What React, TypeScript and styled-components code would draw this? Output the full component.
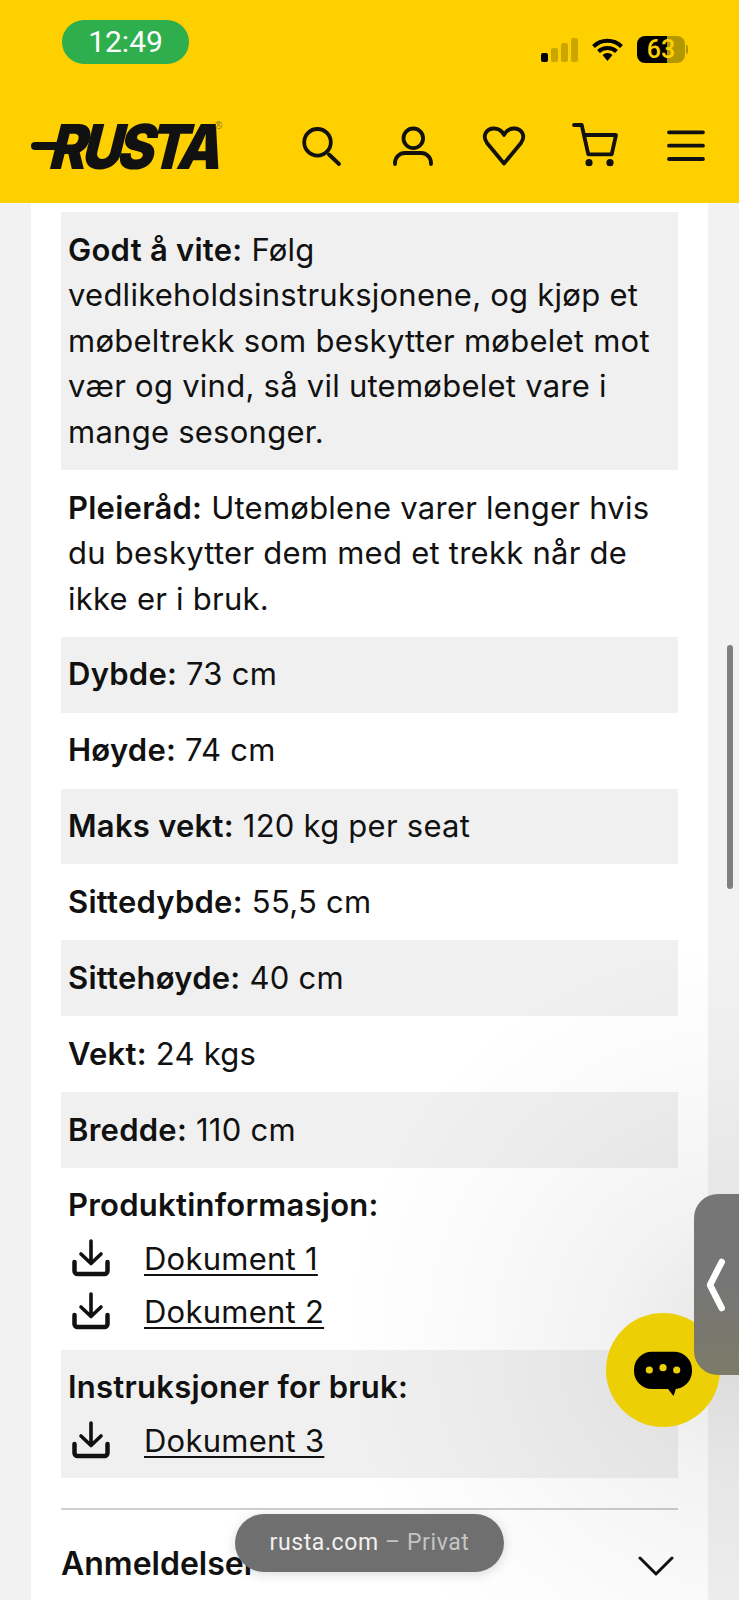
import React from "react";
import styled, { createGlobalStyle } from "styled-components";

const Global = createGlobalStyle`
  html, body { margin: 0; padding: 0; background: #f2f2f2; }
  body { width: 739px; height: 1600px; overflow: hidden; font-family: Inter, "Noto Sans", sans-serif; color: #111; }
  * { box-sizing: border-box; }
`;

const Page = styled.div`
  position: relative;
  width: 739px;
  height: 1600px;
  overflow: hidden;
  background: #f2f2f2;
`;

const Header = styled.header`
  height: 203px;
  background: #ffd000;
  display: flex;
  flex-direction: column;
`;

const StatusBar = styled.div`
  height: 110px;
  padding: 20px 51px 0 62px;
  display: flex;
  justify-content: space-between;
  align-items: flex-start;
`;

const Clock = styled.div`
  width: 127px;
  height: 44px;
  border-radius: 22px;
  background: #2fae4e;
  color: #fff;
  font: 400 30px/44px "Roboto", sans-serif;
  text-align: center;
`;

const StatusIcons = styled.div`
  display: flex;
  align-items: center;
  gap: 14px;
  margin-top: 16px;
`;

const Battery = styled.div`
  display: flex;
  align-items: center;
  gap: 1px;
`;

const BatteryBody = styled.div`
  width: 48px;
  height: 27px;
  border-radius: 8px;
  background: linear-gradient(to right, #000 62%, #b39700 62%);
  color: #ffd000;
  font: 500 25px/27px "Roboto", sans-serif;
  text-align: center;
`;

const BatteryNub = styled.div`
  width: 2px;
  height: 9px;
  border-radius: 0 2px 2px 0;
  background: #b39700;
`;

const NavBar = styled.div`
  height: 70px;
  display: flex;
  align-items: center;
  justify-content: space-between;
  padding: 0 29px 0 31px;
`;

const Logo = styled.div`
  position: relative;
  width: 186px;
  height: 46px;
  padding: 2px 0 0 16px;
  font: 900 62px/46px Inter, "Liberation Sans", sans-serif;
  letter-spacing: -5.5px;
  color: #111;
  white-space: nowrap;
  &::before {
    content: "";
    position: absolute;
    left: 0;
    top: 20px;
    width: 30px;
    height: 8px;
    border-radius: 4px;
    background: #111;
  }
`;

const LogoWord = styled.span`
  display: inline-block;
  transform: skewX(-14deg) scaleX(0.9);
  transform-origin: left bottom;
`;

const Registered = styled.span`
  position: absolute;
  left: 184px;
  top: -1px;
  font: 400 10px/10px "Liberation Sans", sans-serif;
  letter-spacing: 0;
  color: #8a7410;
`;

const NavIcons = styled.div`
  display: flex;
  align-items: center;
  gap: 43px;
`;

const Card = styled.main`
  margin: 0 31px;
  height: 1397px;
  background: #fff;
  padding: 9px 30px 0;
`;

const Row = styled.div<{ $shade?: boolean }>`
  padding: 14.7px 7px 15.7px;
  background: ${(p) => (p.$shade ? "#f0f0f0" : "transparent")};
  font-size: 31px;
  line-height: 45.5px;
  letter-spacing: 0.25px;
`;

const Label = styled.b`
  font-weight: 600;
`;

const Heading = styled.div`
  font-weight: 600;
  font-size: 31px;
  line-height: 45.5px;
  letter-spacing: 0.25px;
  margin-bottom: 4.5px;
`;

const DocBlock = styled.div<{ $shade?: boolean; $h: number }>`
  height: ${(p) => p.$h}px;
  padding: 14px 7px 0;
  background: ${(p) => (p.$shade ? "#f0f0f0" : "transparent")};
`;

const DocRow = styled.div`
  display: flex;
  align-items: center;
  gap: 33px;
  height: 53px;
  padding-left: 3px;
  font-size: 31px;
  letter-spacing: 0.25px;
`;

const DocLink = styled.a`
  color: #111;
  text-decoration: underline;
  text-underline-offset: 4px;
  text-decoration-thickness: 2px;
`;

const Divider = styled.div`
  margin-top: 30px;
  border-top: 2px solid #cfcfcf;
`;

const Accordion = styled.div`
  display: flex;
  justify-content: space-between;
  align-items: center;
  height: 108px;
  font-size: 32px;
  font-weight: 600;
  padding-right: 4px;
`;

const AccordionChevron = styled.svg`
  margin-top: 4px;
`;

const Glow = styled.div`
  position: absolute;
  inset: 0;
  pointer-events: none;
  background: radial-gradient(circle 400px at 739px 1340px, rgba(0,0,0,0.1), rgba(0,0,0,0.05) 32%, rgba(0,0,0,0.02) 68%, rgba(0,0,0,0) 100%);
`;

const Scroll = styled.div`
  position: absolute;
  left: 727px;
  top: 645px;
  width: 6px;
  height: 244px;
  border-radius: 3px;
  background: #7f7f7f;
`;

const Chat = styled.div`
  position: absolute;
  left: 606px;
  top: 1313px;
  width: 114px;
  height: 114px;
  border-radius: 50%;
  background: #edcf06;
  display: flex;
  align-items: center;
  justify-content: center;
`;

const Tab = styled.div`
  position: absolute;
  left: 694px;
  top: 1194px;
  width: 60px;
  height: 181px;
  border-radius: 24px 0 0 24px;
  background: linear-gradient(#767676 50%, #7c7a68);
  padding: 60px 0 0 12px;
`;

const Pill = styled.div`
  position: absolute;
  left: 235px;
  top: 1514px;
  width: 269px;
  height: 58px;
  border-radius: 29px;
  background: #6f6f6f;
  box-shadow: 0 2px 12px rgba(0,0,0,0.15);
  color: #f1f1f1;
  font: 400 23px/58px Roboto, sans-serif;
  letter-spacing: 0.6px;
  text-align: center;
  span { color: #c4c4c4; }
`;

const Dl = () => (
  <svg width="40" height="40" viewBox="0 0 40 40" fill="none" stroke="#111" strokeWidth="3.6" strokeLinecap="round" strokeLinejoin="round">
    <path d="M20 3v22M10 16l10 9.500 10-9.500" />
    <path d="M3.500 24v9a3 3 0 0 0 3 3h27a3 3 0 0 0 3-3v-9" strokeWidth="4.500" />
  </svg>
);

const NavIcon = ({ children }: { children: React.ReactNode }) => (
  <svg width="48" height="48" viewBox="0 0 48 48" fill="none" stroke="#111" strokeWidth="3.800" strokeLinecap="round" strokeLinejoin="round">
    {children}
  </svg>
);

const rows: [string, string][] = [
  ["Dybde:", "73 cm"],
  ["Høyde:", "74 cm"],
  ["Maks vekt:", "120 kg per seat"],
  ["Sittedybde:", "55,5 cm"],
  ["Sittehøyde:", "40 cm"],
  ["Vekt:", "24 kgs"],
  ["Bredde:", "110 cm"],
];

export default function App() {
  return (
    <Page>
      <Global />
      <Header>
        <StatusBar>
          <Clock>12:49</Clock>
          <StatusIcons>
            <svg width="37" height="24" viewBox="0 0 37 24" fill="#000">
              <rect x="0" y="15" width="7" height="9" rx="2" />
              <g opacity="0.2"><rect x="10" y="10" width="7" height="14" rx="2" /><rect x="20" y="5" width="7" height="19" rx="2" /><rect x="30" y="0" width="7" height="24" rx="2" /></g>
            </svg>
            <svg width="31" height="23" viewBox="0 0 31 23" fill="none" stroke="#000" strokeWidth="4">
              <path d="M1.500 8.500a20 20 0 0 1 28 0M6.500 13.500a13 13 0 0 1 18 0" />
              <path d="M10.500 17l5 6 5-6a7.500 7.500 0 0 0-10 0z" fill="#000" stroke="none" />
            </svg>
            <Battery>
              <BatteryBody>63</BatteryBody>
              <BatteryNub />
            </Battery>
          </StatusIcons>
        </StatusBar>
        <NavBar>
          <Logo>
            <LogoWord>RUSTA</LogoWord>
            <Registered>®</Registered>
          </Logo>
          <NavIcons>
            <NavIcon>
              <circle cx="19.500" cy="21.300" r="13.300" />
              <path d="M31 33.500l10 9.500" />
            </NavIcon>
            <NavIcon>
              <circle cx="24.300" cy="17.300" r="9.800" />
              <path d="M6 43v-1a10 10 0 0 1 10-10h16a10 10 0 0 1 10 10v1" />
            </NavIcon>
            <NavIcon>
              <path d="M24 42.500L7 22C2 15 6 7.500 14 7.500c5 0 8 2.500 10 6.500 2-4 5-6.500 10-6.500 8 0 12 7.500 7 14.500z" />
            </NavIcon>
            <NavIcon>
              <path d="M3 4h7.700l6.600 29.300h23.400L45 14H13" />
              <circle cx="18" cy="41.700" r="3.600" fill="#111" stroke="none" />
              <circle cx="39" cy="41.700" r="3.600" fill="#111" stroke="none" />
            </NavIcon>
            <NavIcon>
              <path d="M7 11.300h34M7 24.700h34M7 38h34" />
            </NavIcon>
          </NavIcons>
        </NavBar>
      </Header>
      <Card>
        <Row $shade><Label>Godt å vite:</Label> Følg vedlikeholdsinstruksjonene, og kjøp et møbeltrekk som beskytter møbelet mot vær og vind, så vil utemøbelet vare i mange sesonger.</Row>
        <Row><Label>Pleieråd:</Label> Utemøblene varer lenger hvis du beskytter dem med et trekk når de ikke er i bruk.</Row>
        {rows.map(([a, b], i) => (
          <Row key={a} $shade={i % 2 === 0}><Label>{a}</Label> {b}</Row>
        ))}
        <DocBlock $h={182}>
          <Heading>Produktinformasjon:</Heading>
          <DocRow><Dl /><DocLink>Dokument 1</DocLink></DocRow>
          <DocRow><Dl /><DocLink>Dokument 2</DocLink></DocRow>
        </DocBlock>
        <DocBlock $shade $h={128}>
          <Heading>Instruksjoner for bruk:</Heading>
          <DocRow><Dl /><DocLink>Dokument 3</DocLink></DocRow>
        </DocBlock>
        <Divider />
        <Accordion>
          Anmeldelser
          <AccordionChevron width="36" height="20" viewBox="0 0 36 20" fill="none" stroke="#111" strokeWidth="3" strokeLinecap="round" strokeLinejoin="round">
            <path d="M2 2l16 16L34 2" />
          </AccordionChevron>
        </Accordion>
      </Card>
      <Glow />
      <Scroll />
      <Chat>
        <svg width="60" height="54" viewBox="0 0 60 54">
          <rect x="1" y="8.700" width="58" height="37.300" rx="18" fill="#000" />
          <path d="M33.500 44h10l-3 9z" fill="#000" />
          <circle cx="16.300" cy="27" r="3.600" fill="#edcf06" />
          <circle cx="30" cy="24.700" r="3.600" fill="#edcf06" />
          <circle cx="43.700" cy="27" r="3.600" fill="#edcf06" />
        </svg>
      </Chat>
      <Tab>
        <svg width="24" height="60" viewBox="0 0 24 60" fill="none" stroke="#fff" strokeWidth="6.500" strokeLinecap="round" strokeLinejoin="round">
          <path d="M15.700 8L4 31l11.700 23" />
        </svg>
      </Tab>
      <Pill>rusta.com <span>– Privat</span></Pill>
    </Page>
  );
}
